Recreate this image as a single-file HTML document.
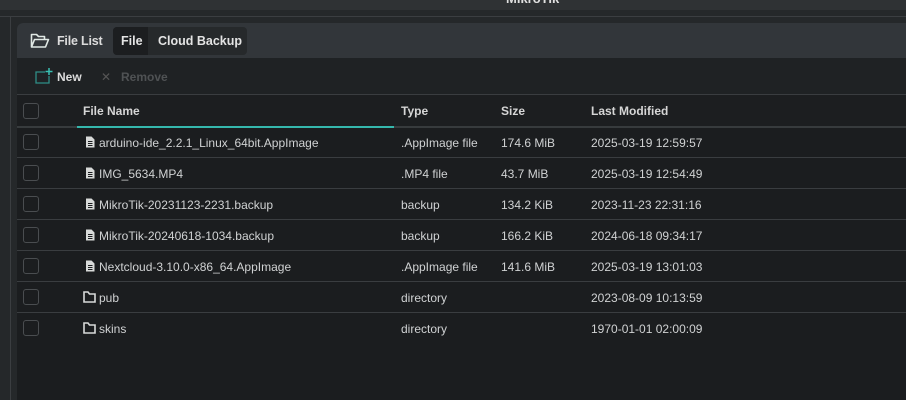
<!DOCTYPE html>
<html><head><style>
*{margin:0;padding:0;box-sizing:border-box}
body{width:906px;height:400px;overflow:hidden;background:#25282a;font-family:"Liberation Sans",sans-serif;color:#d8dadb;position:relative;font-size:12px}
.top{position:absolute;left:0;top:0;width:906px;height:10px;background:#2f3234}
.title{position:absolute;left:506px;top:-9px;font-weight:bold;font-size:13px;color:#e0e0e0}
.hl{position:absolute;left:0;top:16px;width:906px;height:1px;background:#3b3e41}
.vl{position:absolute;left:10px;top:17px;width:1px;height:383px;background:#3b3e41}
.panel{position:absolute;left:17px;top:23px;width:889px;height:377px;background:#1b1d1f;border-radius:6px 0 0 0;overflow:hidden}
.hdr{position:absolute;left:0;top:0;width:889px;height:35px;background:#32363a}
.tb{position:absolute;left:0;top:35px;width:889px;height:37px;background:#1f2224;border-bottom:1px solid #3a3d40}
.abs{position:absolute;white-space:nowrap}
.b{font-weight:bold}
.cb{position:absolute;left:6px;width:16px;height:16px;border:1px solid #4a4d50;border-radius:3px}
.row{position:absolute;left:0;width:889px;height:31px;border-bottom:1px solid #3a3d40}
.row span{position:absolute;top:9px;font-size:12px;color:#d0d2d3}
</style></head><body>
<div class="top"></div><div class="title">MikroTik</div>
<div class="hl"></div><div class="vl"></div>
<div class="panel">
 <div class="hdr">
  <svg class="abs" style="left:13px;top:9px" width="20" height="17" viewBox="0 0 20 17"><path d="M1.5 15V2.5h5l2 2h6v3M1.5 15l3-7.5h14l-3 7.5z" fill="none" stroke="#e0e8e4" stroke-width="1.6" stroke-linejoin="round"/></svg>
  <div class="abs b" style="left:40px;top:11px;font-size:12.5px;color:#dcdcdc;letter-spacing:-0.2px">File List</div>
  <div class="abs" style="left:96px;top:4px;width:134px;height:28px;background:#26292b;border-radius:4px"></div>
  <div class="abs" style="left:96px;top:4px;width:35px;height:28px;background:#1c1e20;border-radius:4px 0 0 4px"></div>
  <div class="abs b" style="left:104px;top:11px;font-size:12.5px;color:#e4e4e4">File</div>
  <div class="abs b" style="left:141px;top:11px;font-size:12.5px;color:#e4e4e4">Cloud Backup</div>
 </div>
 <div class="tb">
  <svg class="abs" style="left:18px;top:10px" width="18" height="16" viewBox="0 0 18 16"><path d="M10 4H1v11h13V8" fill="none" stroke="#2f8f88" stroke-width="1.3"/><path d="M14 0v7M10.5 3.5h7" stroke="#39c0b3" stroke-width="1.5"/></svg>
  <div class="abs b" style="left:40px;top:12px;font-size:12px;color:#dcdcdc">New</div>
  <div class="abs" style="left:84px;top:12px;color:#555;font-size:12px">✕</div>
  <div class="abs b" style="left:104px;top:12px;font-size:12px;color:#4f5254">Remove</div>
 </div>
 <div class="abs" style="left:0;top:72px;width:889px;height:32px;background:#1c1e20"></div>
 <div class="cb" style="top:80px"></div>
 <div class="abs b" style="left:66px;top:81px;color:#d6d6d6">File Name</div>
 <div class="abs b" style="left:384px;top:81px;color:#d6d6d6">Type</div>
 <div class="abs b" style="left:484px;top:81px;color:#d6d6d6">Size</div>
 <div class="abs b" style="left:574px;top:81px;color:#d6d6d6">Last Modified</div>
 <div class="abs" style="left:0;top:103px;width:889px;height:2px;background:#373b3d"></div>
 <div class="abs" style="left:60px;top:103px;width:317px;height:2px;background:#35b8ad"></div>

 <div class="row" style="top:104px"><div class="cb" style="top:7px"></div><svg class="abs" style="left:68px;top:9px" width="10" height="12"><path d="M1 .5h5.5l3 3V11.5H1z" fill="#d8dad9"/><path d="M3 5.5h4.5M3 7.5h4.5M3 9.5h4.5" stroke="#1b1d1f"/></svg><span style="left:82px">arduino-ide_2.2.1_Linux_64bit.AppImage</span><span style="left:384px">.AppImage file</span><span style="left:484px">174.6 MiB</span><span style="left:574px">2025-03-19 12:59:57</span></div>
 <div class="row" style="top:135px"><div class="cb" style="top:7px"></div><svg class="abs" style="left:68px;top:9px" width="10" height="12"><path d="M1 .5h5.5l3 3V11.5H1z" fill="#d8dad9"/><path d="M3 5.5h4.5M3 7.5h4.5M3 9.5h4.5" stroke="#1b1d1f"/></svg><span style="left:82px">IMG_5634.MP4</span><span style="left:384px">.MP4 file</span><span style="left:484px">43.7 MiB</span><span style="left:574px">2025-03-19 12:54:49</span></div>
 <div class="row" style="top:166px"><div class="cb" style="top:7px"></div><svg class="abs" style="left:68px;top:9px" width="10" height="12"><path d="M1 .5h5.5l3 3V11.5H1z" fill="#d8dad9"/><path d="M3 5.5h4.5M3 7.5h4.5M3 9.5h4.5" stroke="#1b1d1f"/></svg><span style="left:82px">MikroTik-20231123-2231.backup</span><span style="left:384px">backup</span><span style="left:484px">134.2 KiB</span><span style="left:574px">2023-11-23 22:31:16</span></div>
 <div class="row" style="top:197px"><div class="cb" style="top:7px"></div><svg class="abs" style="left:68px;top:9px" width="10" height="12"><path d="M1 .5h5.5l3 3V11.5H1z" fill="#d8dad9"/><path d="M3 5.5h4.5M3 7.5h4.5M3 9.5h4.5" stroke="#1b1d1f"/></svg><span style="left:82px">MikroTik-20240618-1034.backup</span><span style="left:384px">backup</span><span style="left:484px">166.2 KiB</span><span style="left:574px">2024-06-18 09:34:17</span></div>
 <div class="row" style="top:228px"><div class="cb" style="top:7px"></div><svg class="abs" style="left:68px;top:9px" width="10" height="12"><path d="M1 .5h5.5l3 3V11.5H1z" fill="#d8dad9"/><path d="M3 5.5h4.5M3 7.5h4.5M3 9.5h4.5" stroke="#1b1d1f"/></svg><span style="left:82px">Nextcloud-3.10.0-x86_64.AppImage</span><span style="left:384px">.AppImage file</span><span style="left:484px">141.6 MiB</span><span style="left:574px">2025-03-19 13:01:03</span></div>
 <div class="row" style="top:259px"><div class="cb" style="top:7px"></div><svg class="abs" style="left:66px;top:9px" width="13" height="12"><path d="M1 1h4l1.5 2H12v8H1z" fill="none" stroke="#d8dad9" stroke-width="1.6"/></svg><span style="left:82px">pub</span><span style="left:384px">directory</span><span style="left:574px">2023-08-09 10:13:59</span></div>
 <div class="row" style="top:290px;border-bottom:none"><div class="cb" style="top:7px"></div><svg class="abs" style="left:66px;top:9px" width="13" height="12"><path d="M1 1h4l1.5 2H12v8H1z" fill="none" stroke="#d8dad9" stroke-width="1.6"/></svg><span style="left:82px">skins</span><span style="left:384px">directory</span><span style="left:574px">1970-01-01 02:00:09</span></div>
</div>
</body></html>
